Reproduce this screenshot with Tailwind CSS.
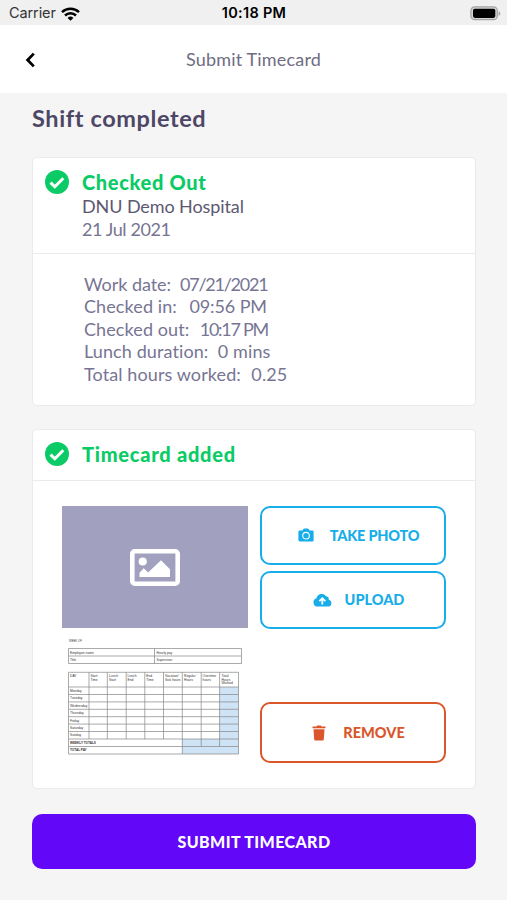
<!DOCTYPE html>
<html lang="en">
<head>
    <meta charset="UTF-8">
    <meta name="viewport" content="width=device-width, initial-scale=1.0">
    <title>Submit Timecard</title>
    <script src="https://cdn.jsdelivr.net/npm/@tailwindcss/browser@4"></script>
</head>
<body class="h-[900px] overflow-hidden bg-[#f5f5f5] font-['Lato',sans-serif] text-[#777593]">

    <!-- Status bar -->
    <div class="grid h-[25px] grid-cols-3 items-center bg-[#f0f0f0] pl-[9px] pr-[6px] pt-[2px] font-['Inter',sans-serif] text-[14.5px] leading-none text-black">
        <div class="flex items-center gap-[5px]">
            <span class="tracking-[-0.1px] text-[#333]">Carrier</span>
            <svg class="h-[14px] w-[19px]" viewBox="0 0 19 14" fill="none" stroke="#000" stroke-width="2.5">
                <path d="M1 5.1a12.4 12.4 0 0 1 17 0"/>
                <path d="M4 8.5a8 8 0 0 1 11 0"/>
                <path d="M6.6 10.9a4.2 4.2 0 0 1 5.8 0L9.5 13.8z" fill="#000" stroke="none"/>
            </svg>
        </div>
        <span class="pr-[2px] text-center font-semibold tracking-[0.3px]">10:18 PM</span>
        <svg class="h-[15px] w-[31px] justify-self-end" viewBox="0 0 31 15">
            <rect x=".9" y=".9" width="26.4" height="12.8" rx="3.8" fill="#d4d4d4" stroke="#a3a3a3" stroke-width="1.2"/>
            <rect x="3" y="2.7" width="22.3" height="9.2" rx="1.8" fill="#000"/>
            <path d="M28.6 5.2c2.2.8 2.2 3.8 0 4.6z" fill="#a3a3a3"/>
        </svg>
    </div>

    <!-- Nav bar -->
    <header class="grid h-[68px] grid-cols-[60px_1fr_60px] items-center bg-white">
        <button class="pl-[25px] pt-px" aria-label="Back">
            <svg class="h-4 w-[10px]" viewBox="0 0 10 16" fill="none" stroke="#000" stroke-width="2.8">
                <path d="M8.8 1.6 2.6 8l6.2 6.4"/>
            </svg>
        </button>
        <h1 class="text-center text-[18px] tracking-[0.18px] text-[#6f6d82]">Submit Timecard</h1>
    </header>

    <main class="pl-[32px] pr-[31px]">
        <h2 class="pt-[10px] text-[23.5px] leading-[30px] font-bold tracking-[0.6px] text-[#4d4766]">Shift completed</h2>

        <section class="mt-[24px] h-[249px] rounded-[5px] border border-[#e9ebee] bg-white">
            <div class="flex h-[96px] gap-[12px] border-b border-[#e9ebee] pl-[12px] pt-[12px]">
                <svg class="h-6 w-6" viewBox="0 0 24 24">
                    <circle cx="12" cy="12" r="12" fill="#0acb66"/>
                    <path d="m5.5 12.6 4.3 4.1 8.5-8.5" fill="none" stroke="#fff" stroke-width="3"/>
                </svg>
                <div class="pl-px leading-[22.5px]">
                    <h3 class="text-[20px] leading-[25px] font-black tracking-[0.65px] text-[#0acb66]">Checked Out</h3>
                    <p class="text-[18px] tracking-[-0.1px] text-[#5c5970]">DNU Demo Hospital</p>
                    <p class="text-[18px] tracking-[-0.4px]">21 Jul 2021</p>
                </div>
            </div>
            <div class="pl-[51px] pt-[19px] text-[18px] leading-[22.4px] tracking-[0.1px]">
                <p class="tracking-[-0.05px]">Work date:&nbsp; <span class="tracking-[-1.25px]">07/21/2021</span></p>
                <p>Checked in:&nbsp; <span class="ml-[3px] tracking-[-0.1px]">09:56 PM</span></p>
                <p>Checked out:&nbsp; <span class="ml-px tracking-[-1.3px]">10:17 PM</span></p>
                <p>Lunch duration:&nbsp; <span>0 mins</span></p>
                <p>Total hours worked:&nbsp; <span class="ml-px">0.25</span></p>
            </div>
        </section>

        <section class="mt-[23px] h-[360px] rounded-[5px] border border-[#e9ebee] bg-white">
            <div class="flex h-[51px] items-center gap-[12px] border-b border-[#e9ebee] pb-[2px] pl-[12px]">
                <svg class="h-6 w-6" viewBox="0 0 24 24">
                    <circle cx="12" cy="12" r="12" fill="#0acb66"/>
                    <path d="m5.5 12.6 4.3 4.1 8.5-8.5" fill="none" stroke="#fff" stroke-width="3"/>
                </svg>
                <h3 class="pl-px text-[20px] font-black tracking-[0.75px] text-[#0acb66]">Timecard added</h3>
            </div>

            <div class="flex gap-[12px] pl-[29px] pt-[25px]">
                <!-- Timecard preview -->
                <div class="w-[186px]">
                    <div class="flex h-[122px] items-center justify-center bg-[#a1a1bf]">
                        <svg class="h-[37px] w-[50px]" viewBox="0 0 50 37">
                            <rect x="2.3" y="2.3" width="45.4" height="32.4" rx="2.5" fill="none" stroke="#fff" stroke-width="4.6"/>
                            <circle cx="12.7" cy="12.5" r="4.1" fill="#fff"/>
                            <path d="M9.5 28v-4.2l4.2-4.6 4.4 4.3L31 11.3l9 9V28z" fill="#fff"/>
                        </svg>
                    </div>
                    <svg class="h-[132px] w-[186px] font-['Liberation_Sans',sans-serif]" viewBox="62 628 186 132" font-size="3.3" fill="#333">
                        <path d="M219.5 687h19v67H182v-15h37.5z" fill="#cfe3f6"/>
                        <g fill="none" stroke="#858585" stroke-width=".7">
                            <path d="M68.5 648.5h173v15h-173zM68.5 656h173M154.5 648.5v15"/>
                            <path d="M68.5 672.3h170V754h-170zM68.5 687h170M68.5 694.5h170M68.5 701.9h170M68.5 709.3h170M68.5 716.7h170M68.5 724.1h170M68.5 731.5h170M68.5 739h170M68.5 746.5h170"/>
                            <path d="M89 672.3V739M107.3 672.3V739M126.2 672.3V739M144.8 672.3V739M163.5 672.3V739M182.3 672.3V754M201.2 672.3v74.2M219.6 672.3v74.2"/>
                        </g>
                        <text x="69" y="642.4" font-size="2.8">WEEK OF</text>
                        <text x="70" y="653.5">Employee name</text>
                        <text x="70" y="661">Title</text>
                        <text x="156.5" y="653.5">Hourly pay</text>
                        <text x="156.5" y="661">Supervisor</text>
                        <text x="70" y="677">DAY</text>
                        <text x="90.5" y="677">Start</text><text x="90.5" y="680.5">Time</text>
                        <text x="109" y="677">Lunch</text><text x="109" y="680.5">Start</text>
                        <text x="127.5" y="677">Lunch</text><text x="127.5" y="680.5">End</text>
                        <text x="146.3" y="677">End</text><text x="146.3" y="680.5">Time</text>
                        <text x="165" y="677">Vacation/</text><text x="165" y="680.5">Sick hours</text>
                        <text x="184" y="677">Regular</text><text x="184" y="680.5">Hours</text>
                        <text x="202.6" y="677">Overtime</text><text x="202.6" y="680.5">hours</text>
                        <text x="221.5" y="677">Total</text><text x="221.5" y="680.5">Hours</text><text x="221.5" y="684">Worked</text>
                        <text x="70" y="692">Monday</text>
                        <text x="70" y="699.4">Tuesday</text>
                        <text x="70" y="706.8">Wednesday</text>
                        <text x="70" y="714.2">Thursday</text>
                        <text x="70" y="721.6">Friday</text>
                        <text x="70" y="729">Saturday</text>
                        <text x="70" y="736.4">Sunday</text>
                        <text x="70" y="743.8" font-size="3.1" font-weight="bold">WEEKLY TOTALS</text>
                        <text x="70" y="751.3" font-size="3.1" font-weight="bold">TOTAL PAY</text>
                    </svg>
                </div>

                <!-- Actions -->
                <div class="flex w-[186px] flex-col text-[14.5px] font-black text-[#16ade9]">
                    <button class="flex h-[59px] items-center justify-center rounded-[10px] border-2 border-[#16ade9] pl-[11px] tracking-[-0.2px]">
                        <svg class="mr-[16px] h-[15px] w-[16px]" viewBox="0 0 16 15">
                            <path d="M1.6 2.6h2.8L5.4 1q.4-.6 1-.6h3.2q.6 0 1 .6l1 1.6h2.8q1.2 0 1.2 1.2v8.6q0 1.2-1.2 1.2H1.6Q.4 13.2.4 12V3.8q0-1.2 1.2-1.2z" fill="currentColor"/>
                            <circle cx="8" cy="7.7" r="3.3" fill="none" stroke="#fff" stroke-width="1.1"/>
                        </svg>
                        TAKE PHOTO
                    </button>
                    <button class="mt-[6px] flex h-[58px] items-center justify-center rounded-[10px] border-2 border-[#16ade9] pl-[11px]">
                        <svg class="mr-[13px] h-[14px] w-[19px]" viewBox="0 0 19 14">
                            <path d="M4.7 13.6A4.3 4.3 0 0 1 3.5 5.2 5.4 5.4 0 0 1 13.2 3.2a3 3 0 0 1 2.5 3.5 3.5 3.5 0 0 1-.7 6.9z" fill="currentColor"/>
                            <path d="M9.3 11.6V6M6.3 8.2l3-3 3 3" fill="none" stroke="#fff" stroke-width="1.8"/>
                        </svg>
                        UPLOAD
                    </button>
                    <button class="mt-[73px] flex h-[61px] items-center justify-center rounded-[10px] border-2 border-[#d9572b] pl-[11px] text-[#d9572b]">
                        <svg class="mr-[17px] h-[16px] w-[14px]" viewBox="0 0 14 16" fill="currentColor">
                            <path d="M.5 1.5h4L5.2.5h3.6l.7 1h4v1.700H.5z"/>
                            <path d="M1.500 4.300h11l-.7 10.200q-.1 1-1.100 1H3.300q-1 0-1.100-1z"/>
                        </svg>
                        REMOVE
                    </button>
                </div>
            </div>
        </section>

        <button class="mt-[25px] h-[55px] w-full rounded-[10px] bg-[#6207f8] text-[16px] font-black tracking-[0.4px] text-white">SUBMIT TIMECARD</button>
    </main>

</body>
</html>
